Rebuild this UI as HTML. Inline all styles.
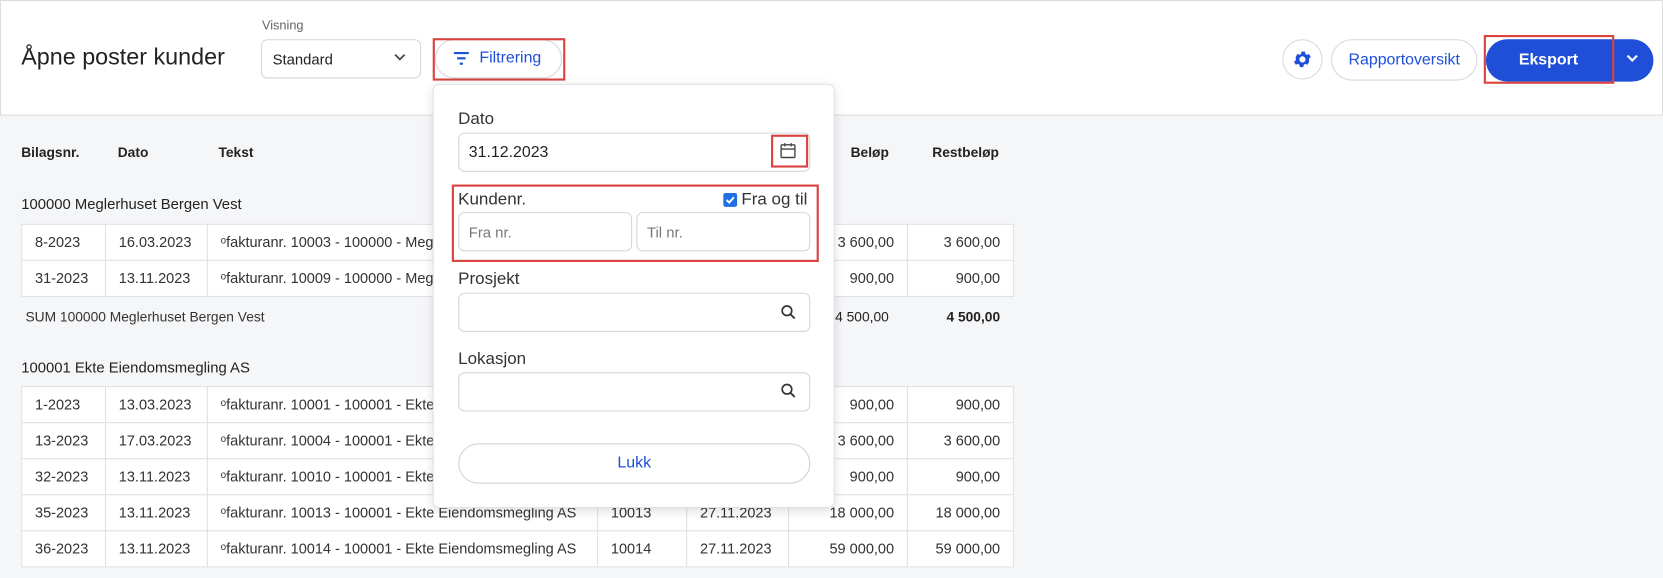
<!DOCTYPE html>
<html><head><meta charset="utf-8"><style>
*{box-sizing:border-box;margin:0;padding:0}
body{width:1663px;height:578px;overflow:hidden;font-family:"Liberation Sans",sans-serif;background:#f5f6f8;color:#222;position:relative}
#w{position:absolute;left:0;top:0;width:1568px;height:545px;transform:scale(1.0606);transform-origin:0 0}
.a{position:absolute}
.hdr{left:0;top:0;width:1568px;height:109px;background:#fff;border:1px solid #ddd;border-bottom:1px solid #d8dade}
.t{font-size:14px}
table{position:absolute;border-collapse:collapse;background:#fff;font-size:13.7px;color:#333;table-layout:fixed}
td{border:1px solid #dfe1e5;height:34px;padding:0 12px;white-space:nowrap;overflow:hidden}
td.r{text-align:right}
.red{position:absolute;border:2px solid #d9423f}
.inp{position:absolute;background:#fff;border:1px solid #d4d6da;border-radius:6px}
.lbl{position:absolute;font-size:16px;color:#333}
</style></head><body><div id="w">
<div class="a hdr"></div>
<div class="a" style="left:20px;top:41px;font-size:22px;color:#222">Åpne poster kunder</div>
<div class="a" style="left:247px;top:17px;font-size:12px;color:#666">Visning</div>
<div class="inp" style="left:246px;top:37px;width:151px;height:37px;border-radius:6px"></div>
<div class="a t" style="left:257px;top:48px;color:#222">Standard</div>
<svg class="a" style="left:371px;top:50px" width="12" height="8" viewBox="0 0 12 8"><path d="M1.5 1.5l4.5 4.5 4.5-4.5" fill="none" stroke="#444" stroke-width="1.6"/></svg>
<div class="inp" style="left:410px;top:37px;width:120px;height:37px;border-radius:19px"></div>
<svg class="a" style="left:427px;top:48px" width="16" height="14" viewBox="0 0 16 14"><path d="M1 2h14M4 7h8M6.5 12h3" stroke="#1f4fd8" stroke-width="2"/></svg>
<div class="a t" style="left:452px;top:46px;color:#1f4fd8;font-size:15px">Filtrering</div>
<div class="red" style="left:408px;top:36px;width:125px;height:40px"></div>

<div class="a" style="left:1209px;top:37px;width:38px;height:38px;border:1px solid #d6d8dc;border-radius:50%;background:#fff"></div>
<svg class="a" style="left:1218px;top:46px" width="20" height="20" viewBox="0 0 24 24"><path fill="#1f4fd8" d="M19.4 13a7.5 7.5 0 000-2l2.1-1.6-2-3.5-2.5 1a7.6 7.6 0 00-1.7-1l-.4-2.7h-4l-.4 2.7a7.6 7.6 0 00-1.7 1l-2.5-1-2 3.5L4.6 11a7.5 7.5 0 000 2l-2.1 1.6 2 3.5 2.5-1c.5.4 1.1.7 1.7 1l.4 2.7h4l.4-2.7c.6-.3 1.2-.6 1.7-1l2.5 1 2-3.5zM12 15.5a3.5 3.5 0 110-7 3.5 3.5 0 010 7z"/></svg>
<div class="a" style="left:1255px;top:37px;width:138px;height:39px;border:1px solid #d6d8dc;border-radius:20px;background:#fff;color:#1f4fd8;font-size:15px;text-align:center;line-height:37px">Rapportoversikt</div>
<div class="a" style="left:1401px;top:37px;width:158px;height:40px;border-radius:20px;background:#1f4fd8"></div>
<div class="a" style="left:1401px;top:37px;width:118px;height:40px;color:#fff;font-weight:bold;font-size:15px;text-align:center;line-height:40px">Eksport</div>
<svg class="a" style="left:1533px;top:51px" width="12" height="8" viewBox="0 0 12 8"><path d="M1.5 1.5l4.5 4.5 4.5-4.5" fill="none" stroke="#fff" stroke-width="2"/></svg>
<div class="red" style="left:1399px;top:33px;width:123px;height:46px"></div>

<div class="a" style="left:20px;top:136px;font-size:13px;font-weight:bold">Bilagsnr.</div>
<div class="a" style="left:111px;top:136px;font-size:13px;font-weight:bold">Dato</div>
<div class="a" style="left:206px;top:136px;font-size:13px;font-weight:bold">Tekst</div>
<div class="a" style="left:802px;top:136px;font-size:13px;font-weight:bold">Beløp</div>
<div class="a" style="left:879px;top:136px;font-size:13px;font-weight:bold">Restbeløp</div>
<div class="a t" style="left:20px;top:184px">100000 Meglerhuset Bergen Vest</div>
<table style="left:20px;top:211px;width:935px">
<colgroup><col width="79"><col width="96"><col width="368"><col width="84"><col width="96"><col width="112"><col width="100"></colgroup>
<tr><td>8-2023</td><td>16.03.2023</td><td>ᵒfakturanr. 10003 - 100000 - Meglerhuset Bergen Vest</td><td>10003</td><td>30.03.2023</td><td class="r">3 600,00</td><td class="r">3 600,00</td></tr>
<tr><td>31-2023</td><td>13.11.2023</td><td>ᵒfakturanr. 10009 - 100000 - Meglerhuset Bergen Vest</td><td>10009</td><td>27.11.2023</td><td class="r">900,00</td><td class="r">900,00</td></tr>
</table>
<div class="a" style="left:24px;top:291px;font-size:13px;color:#333">SUM 100000 Meglerhuset Bergen Vest</div>
<div class="a" style="left:780px;top:291px;font-size:13px;width:58px;text-align:right">4 500,00</div>
<div class="a" style="left:860px;top:291px;font-size:13px;font-weight:bold;width:83px;text-align:right">4 500,00</div>
<div class="a t" style="left:20px;top:338px">100001 Ekte Eiendomsmegling AS</div>
<table style="left:20px;top:364px;width:935px">
<colgroup><col width="79"><col width="96"><col width="368"><col width="84"><col width="96"><col width="112"><col width="100"></colgroup>
<tr><td>1-2023</td><td>13.03.2023</td><td>ᵒfakturanr. 10001 - 100001 - Ekte Eiendomsmegling AS</td><td>10001</td><td>27.03.2023</td><td class="r">900,00</td><td class="r">900,00</td></tr>
<tr><td>13-2023</td><td>17.03.2023</td><td>ᵒfakturanr. 10004 - 100001 - Ekte Eiendomsmegling AS</td><td>10004</td><td>31.03.2023</td><td class="r">3 600,00</td><td class="r">3 600,00</td></tr>
<tr><td>32-2023</td><td>13.11.2023</td><td>ᵒfakturanr. 10010 - 100001 - Ekte Eiendomsmegling AS</td><td>10010</td><td>27.11.2023</td><td class="r">900,00</td><td class="r">900,00</td></tr>
<tr><td>35-2023</td><td>13.11.2023</td><td>ᵒfakturanr. 10013 - 100001 - Ekte Eiendomsmegling AS</td><td>10013</td><td>27.11.2023</td><td class="r">18 000,00</td><td class="r">18 000,00</td></tr>
<tr><td>36-2023</td><td>13.11.2023</td><td>ᵒfakturanr. 10014 - 100001 - Ekte Eiendomsmegling AS</td><td>10014</td><td>27.11.2023</td><td class="r">59 000,00</td><td class="r">59 000,00</td></tr>
</table>

<div class="a" style="left:408px;top:79px;width:379px;height:400px;background:#fff;border:1px solid #e0e2e6;border-radius:6px;box-shadow:0 3px 10px rgba(0,0,0,.12)"></div>
<div class="lbl" style="left:432px;top:104px">Dato</div>
<div class="inp" style="left:432px;top:125px;width:332px;height:37px"></div>
<div class="a" style="left:442px;top:135px;font-size:15px;color:#222">31.12.2023</div>
<svg class="a" style="left:735px;top:134px" width="16" height="16" viewBox="0 0 16 16"><rect x="1.5" y="2.5" width="13" height="12" rx="1" fill="none" stroke="#444" stroke-width="1.3"/><path d="M1.5 6.5h13M5 1v3M11 1v3" stroke="#444" stroke-width="1.3"/></svg>
<div class="red" style="left:727px;top:127px;width:35px;height:31px"></div>
<div class="lbl" style="left:432px;top:180px">Kundenr.</div>
<div class="a" style="left:682px;top:182px;width:13px;height:13px;background:#1f6fe6;border-radius:2px"></div>
<svg class="a" style="left:683px;top:183px" width="11" height="11" viewBox="0 0 11 11"><path d="M2 5.5l2.5 2.5 4.5-5" fill="none" stroke="#fff" stroke-width="1.8"/></svg>
<div class="lbl" style="left:699px;top:180px">Fra og til</div>
<div class="inp" style="left:432px;top:200px;width:164px;height:37px"></div>
<div class="a" style="left:442px;top:211px;font-size:14px;color:#777">Fra nr.</div>
<div class="inp" style="left:600px;top:200px;width:164px;height:37px"></div>
<div class="a" style="left:610px;top:211px;font-size:14px;color:#777">Til nr.</div>
<div class="red" style="left:426px;top:174px;width:346px;height:73px"></div>
<div class="lbl" style="left:432px;top:255px">Prosjekt</div>
<div class="inp" style="left:432px;top:276px;width:332px;height:37px"></div>
<svg class="a" style="left:736px;top:287px" width="15" height="15" viewBox="0 0 15 15"><circle cx="6" cy="6" r="4.5" fill="none" stroke="#333" stroke-width="1.6"/><path d="M9.3 9.3l4 4" stroke="#333" stroke-width="1.8"/></svg>
<div class="lbl" style="left:432px;top:330px">Lokasjon</div>
<div class="inp" style="left:432px;top:351px;width:332px;height:37px"></div>
<svg class="a" style="left:736px;top:361px" width="15" height="15" viewBox="0 0 15 15"><circle cx="6" cy="6" r="4.5" fill="none" stroke="#333" stroke-width="1.6"/><path d="M9.3 9.3l4 4" stroke="#333" stroke-width="1.8"/></svg>
<div class="a" style="left:432px;top:418px;width:332px;height:38px;border:1px solid #cfd1d5;border-radius:19px;background:#fff;color:#1f4fd8;font-size:15px;text-align:center;line-height:36px">Lukk</div>
</div></body></html>
